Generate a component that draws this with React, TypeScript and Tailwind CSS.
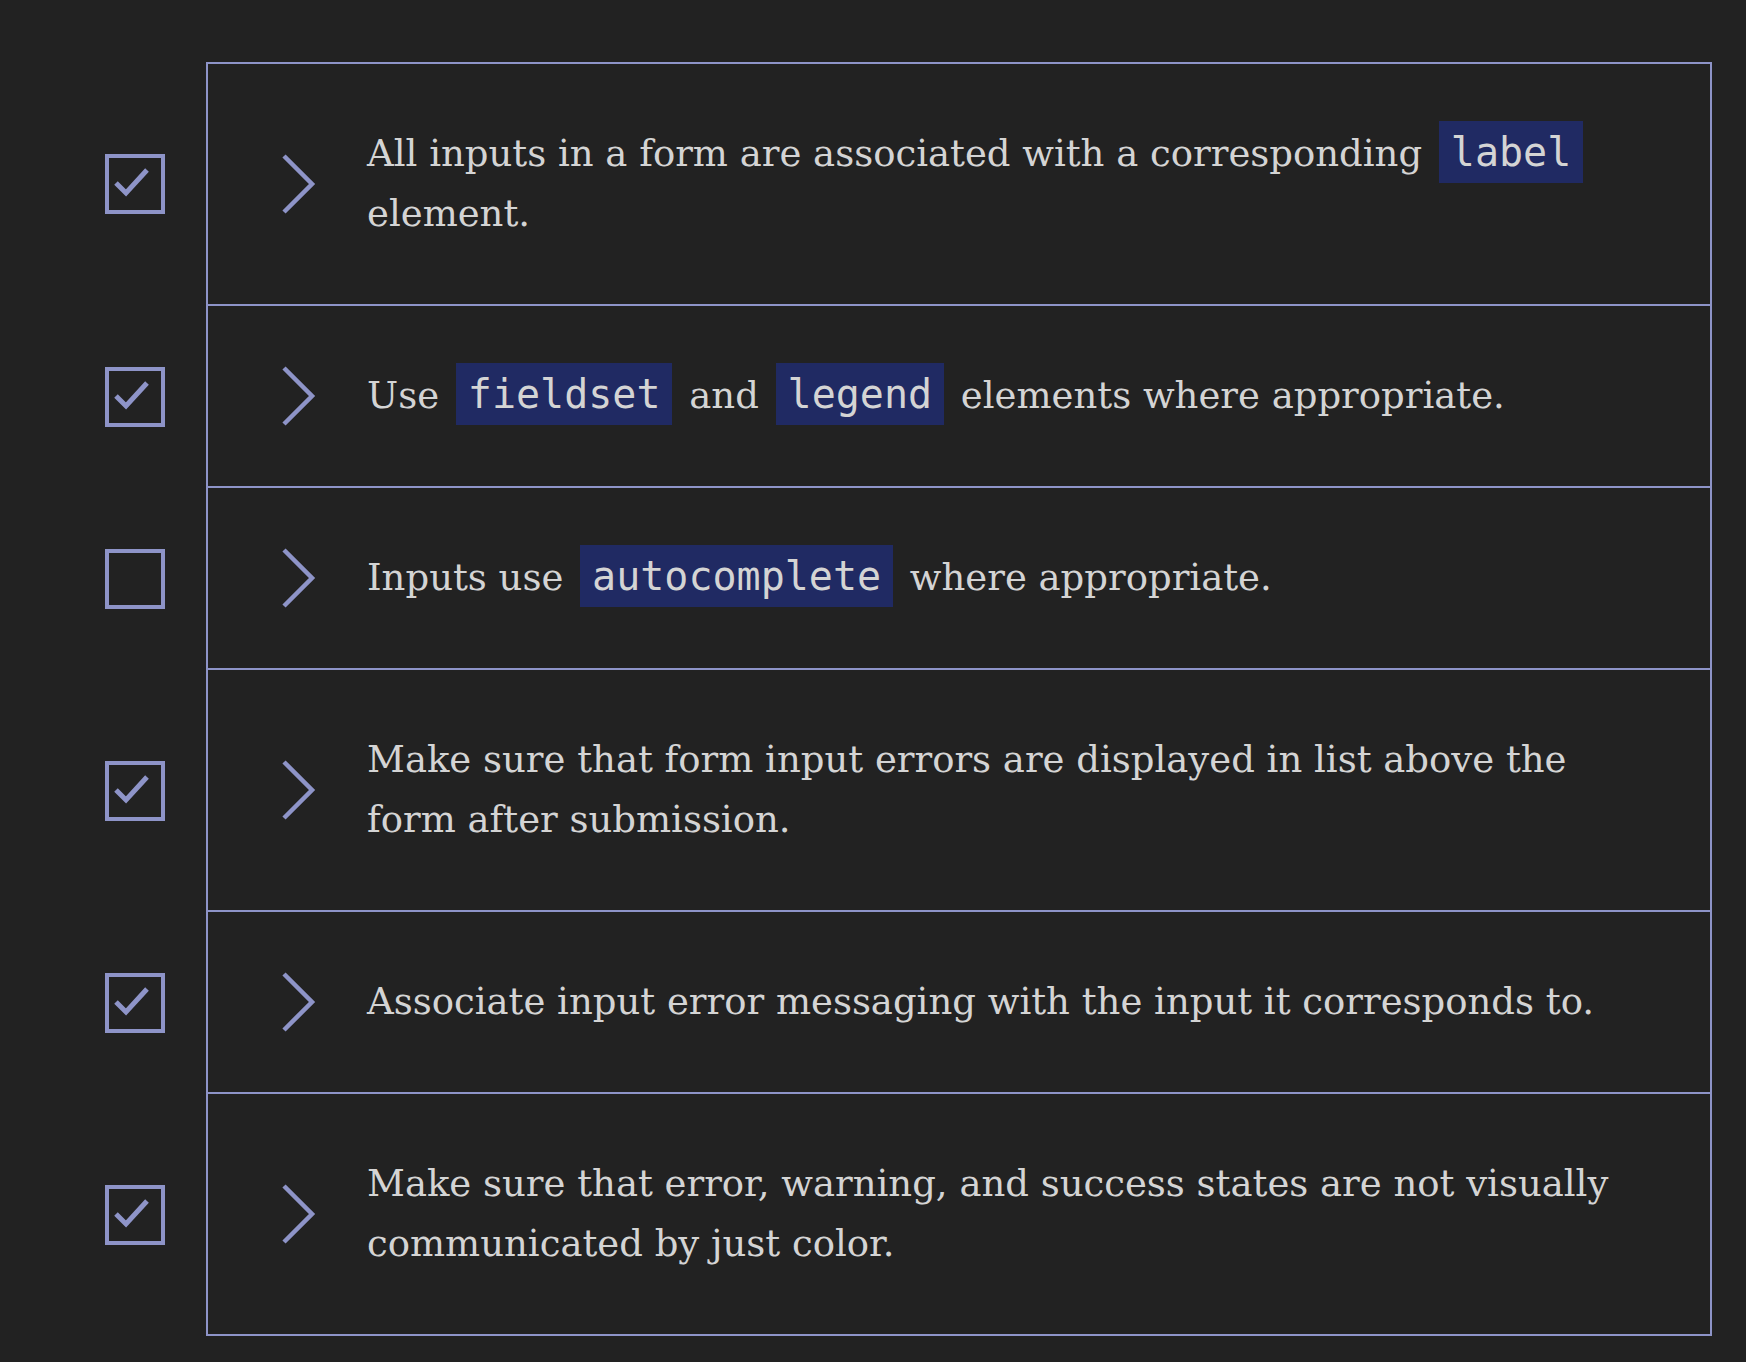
import React from "react";

type Part = string | { code: string };

const items: { checked: boolean; parts: Part[] }[] = [
  {
    checked: true,
    parts: ["All inputs in a form are associated with a corresponding ", { code: "label" }, " element."],
  },
  {
    checked: true,
    parts: ["Use ", { code: "fieldset" }, " and ", { code: "legend" }, " elements where appropriate."],
  },
  {
    checked: false,
    parts: ["Inputs use ", { code: "autocomplete" }, " where appropriate."],
  },
  {
    checked: true,
    parts: ["Make sure that form input errors are displayed in list above the form after submission."],
  },
  {
    checked: true,
    parts: ["Associate input error messaging with the input it corresponds to."],
  },
  {
    checked: true,
    parts: ["Make sure that error, warning, and success states are not visually communicated by just color."],
  },
];

function Checkbox({ checked }: { checked: boolean }) {
  return (
    <div className="w-[60px] h-[60px] border-[4px] border-[#8e94c8] relative shrink-0">
      {checked && (
        <svg className="absolute left-[-4px] top-[-4px]" width="60" height="60" viewBox="0 0 60 60" fill="none">
          <polyline points="11,29 21,39 42,16" stroke="#8e94c8" strokeWidth="5" strokeLinecap="butt" strokeLinejoin="miter" />
        </svg>
      )}
    </div>
  );
}

function Chevron() {
  return (
    <svg width="34" height="60" viewBox="0 0 34 60" fill="none" className="shrink-0">
      <polyline points="2,2 30,30 2,58" stroke="#8e94c8" strokeWidth="4.5" strokeLinecap="butt" strokeLinejoin="miter" />
    </svg>
  );
}

export default function App() {
  return (
    <div className="min-h-[1362px] w-full bg-[#222222] pt-[62px] pr-[34px] pb-[29px]">
      <div className="flex flex-col">
        {items.map((it, i) => (
          <div key={i} className="flex items-stretch">
            <div className="w-[206px] shrink-0 flex items-center pl-[105px]">
              <Checkbox checked={it.checked} />
            </div>
            <div
              className={
                "flex-1 flex items-center border-x-2 border-b-2 border-[#8e94c8] pl-[74px] pr-[70px] " +
                (i === 0 ? "border-t-2" : "")
              }
            >
              <Chevron />
              <p
                className="ml-[51px] py-[60px] text-[37px] leading-[60px] text-[#d4d4d4]"
                style={{ fontFamily: '"DejaVu Serif", "Liberation Serif", serif' }}
              >
                {it.parts.map((p, j) =>
                  typeof p === "string" ? (
                    <span key={j}>{p}</span>
                  ) : (
                    <code
                      key={j}
                      className="mx-[5px] px-[12px] py-[8px] bg-[#202a63] text-[#d4d4d4] text-[40px] leading-none"
                      style={{ fontFamily: '"DejaVu Sans Mono", "Liberation Mono", monospace' }}
                    >
                      {p.code}
                    </code>
                  )
                )}
              </p>
            </div>
          </div>
        ))}
      </div>
    </div>
  );
}
